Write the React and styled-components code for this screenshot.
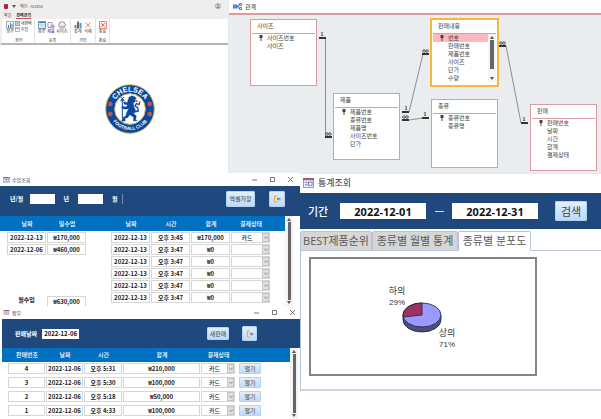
import React from "react";
import styled, { createGlobalStyle, css } from "styled-components";

const NAVY = "#1f497d";
const BLUE = "#0070c0";
const PINK = "#dc9aa3";

const GlobalStyle = createGlobalStyle`
  *, *::before, *::after { box-sizing: border-box; }
  body {
    margin: 0;
    background: #fff;
    font-family: "Noto Sans CJK KR", "Noto Sans", sans-serif;
    color: #333;
    overflow-x: hidden;
  }
  button, input, select { font: inherit; color: inherit; margin: 0; }
  table { border-collapse: collapse; table-layout: fixed; }
`;

const Page = styled.main`
  display: flex;
  flex-direction: column;
`;

const Split = styled.div`
  display: grid;
  grid-template-columns: ${(p) => p.$columns};
`;

/* ---------- ribbon window ---------- */

const AccessWindow = styled.section`
  display: flex;
  flex-direction: column;
  border-right: 1px solid #e8e8e8;
  font-size: 5px;
  line-height: 6px;
`;

const AccessTitle = styled.header`
  display: flex;
  align-items: center;
  gap: 4px;
  height: 12px;
  padding: 0 7px 0 4px;
  background: #eee;
  color: #555;
`;

const AccessName = styled.span`
  flex: 1;
  font-size: 4px;
`;

const MenuBar = styled.nav`
  display: flex;
  gap: 5px;
  height: 7px;
  padding-left: 4px;
  background: #eee;
`;

const MenuItem = styled.button`
  padding: 0;
  border: 0;
  border-bottom: 1px solid ${(p) => (p.$active ? "#c8525c" : "transparent")};
  background: none;
  font-size: 4px;
  line-height: 5px;
  font-weight: ${(p) => (p.$active ? 700 : 400)};
  height: 7px;
`;

const Ribbon = styled.div`
  display: flex;
  height: 26px;
  padding-left: 2px;
  background: #fff;
  border-bottom: 2px solid #b5b5b5;
  border-left: 2px solid #eee;
`;

const RibbonGroup = styled.div`
  display: flex;
  flex-direction: column;
  justify-content: space-between;
  width: ${(p) => p.$width}px;
  padding: 2px 2px 0;
  border-right: 1px solid #e2e2e2;
  font-size: 4px;
  line-height: 5px;
  text-align: center;
`;

const RibbonRow = styled.div`
  display: flex;
  justify-content: space-around;
`;

const RibbonButton = styled.button`
  display: flex;
  flex-direction: column;
  align-items: center;
  padding: 0;
  border: 0;
  background: none;
  line-height: 5px;
  white-space: nowrap;
`;

const SmallStack = styled.div`
  display: flex;
  flex-direction: column;
  gap: 1px;
`;

const SmallButton = styled(RibbonButton)`
  flex-direction: row;
  gap: 1px;
`;

const LogoArea = styled.div`
  display: flex;
  justify-content: center;
  padding: 39px 0 0 32px;
`;

/* ---------- relationship diagram ---------- */

const RelationWindow = styled.section`
  display: flex;
  flex-direction: column;
`;

const RelationTitle = styled.header`
  display: flex;
  align-items: center;
  gap: 3px;
  height: 15px;
  padding-left: 4px;
  border-bottom: 2px solid ${PINK};
  font-size: 6px;
  line-height: 8px;
`;

const Canvas = styled.div`
  position: relative;
  height: 158px;
  background: #e9edf0;
  overflow: hidden;
`;

const Links = styled.svg`
  position: absolute;
  left: 0;
  top: 0;
`;

const Entity = styled.article`
  position: absolute;
  left: ${(p) => p.$x}px;
  top: ${(p) => p.$y}px;
  width: 67px;
  height: ${(p) => p.$h}px;
  padding: 0 1px;
  background: #fff;
  border: 1px solid ${PINK};
  ${(p) => p.$selected && css`outline: 2px solid #f6b83c; outline-offset: -1px;`}
  font-size: 6px;
  line-height: 8px;
  color: #444;
`;

const EntityName = styled.h3`
  margin: 0;
  height: 14px;
  padding: 2px 0 0 5px;
  border-bottom: 1px solid ${PINK};
  font-size: 6px;
  font-weight: 400;
  line-height: 8px;
`;

const EntityBody = styled.div`
  display: flex;
`;

const FieldList = styled.ul`
  flex: 1;
  margin: 0;
  padding: 0;
  list-style: none;
`;

const Field = styled.li`
  display: flex;
  align-items: center;
  gap: 3px;
  height: 8px;
  padding-left: 6px;
  background: ${(p) => (p.$selected ? "#ffb9bd" : "transparent")};
`;

/* ---------- form windows ---------- */

const Column = styled.div`
  display: flex;
  flex-direction: column;
  min-width: 0;
`;

const FormWindow = styled.section`
  display: flex;
  flex-direction: column;
  padding-left: ${(p) => p.$inset || 0}px;
`;

const Caption = styled.header`
  display: flex;
  align-items: center;
  gap: 2px;
  height: 13px;
  padding: 0 ${(p) => p.$right}px 0 ${(p) => p.$left}px;
  font-size: 5px;
  line-height: 8px;
`;

const CaptionText = styled.h2`
  flex: 1;
  margin: 0;
  font-size: inherit;
  font-weight: 400;
`;

const CaptionButtons = styled.div`
  display: flex;
  gap: 12px;
`;

const CaptionButton = styled.button`
  display: flex;
  padding: 0;
  border: 0;
  background: none;
`;

const FormHeader = styled.div`
  display: flex;
  align-items: center;
  height: ${(p) => p.$h}px;
  padding: 0 ${(p) => p.$right}px ${(p) => p.$bottom}px ${(p) => p.$left}px;
  background: ${NAVY};
  color: #fff;
  font-size: 6px;
  font-weight: 700;
  line-height: 8px;
`;

const HeaderField = styled.label`
  display: flex;
  align-items: center;
  gap: ${(p) => p.$gap}px;
  margin-right: ${(p) => p.$after || 0}px;
`;

const HeaderInput = styled.input`
  width: ${(p) => p.$w}px;
  height: 10px;
  padding: 0;
  border: 0;
  background: #fff;
  color: #111;
  text-align: center;
`;

const Separator = styled.span`
  width: 1px;
  height: 10px;
  margin-left: 5px;
  background: #6f8cb3;
`;

const Spacer = styled.span`
  flex: 1;
`;

const ActionButton = styled.button`
  display: flex;
  align-items: center;
  justify-content: center;
  width: ${(p) => p.$w}px;
  height: ${(p) => p.$h}px;
  margin-right: ${(p) => p.$after || 0}px;
  padding: 0;
  border: 1px solid #b5d2f3;
  border-radius: 1px;
  background: linear-gradient(#e2eefb, #bcd9fb);
  color: #444;
  font-weight: 400;
  font-size: ${(p) => p.$size || 6}px;
  line-height: 8px;
  white-space: nowrap;
`;

const FormBody = styled.div`
  display: flex;
  align-items: stretch;
  height: ${(p) => p.$h}px;
  overflow: hidden;
`;

const TableSlot = styled.div`
  flex: ${(p) => p.$grow} 1 0;
  min-width: 0;
`;

const DataTable = styled.table`
  width: 100%;
  font-size: 6px;
  font-weight: 700;
  line-height: 8px;
  color: #222;
`;

const HeadCell = styled.th`
  height: ${(p) => p.$h}px;
  padding: 0;
  background: ${BLUE};
  color: #fff;
  font-size: 6px;
  font-weight: 500;
  white-space: nowrap;
`;

const Cell = styled.td`
  height: ${(p) => p.$h}px;
  padding: 1px 1px 0 0;
  vertical-align: top;
  text-align: center;
`;

const CellInput = styled.input`
  display: block;
  width: 100%;
  height: 11px;
  padding: 0;
  border: 1px solid #d6d6d6;
  background: #fff;
  text-align: center;
`;

const Combo = styled.span`
  display: flex;
  height: 11px;
  border: 1px solid #d6d6d6;
`;

const ComboSelect = styled.select`
  flex: 1;
  min-width: 0;
  height: 9px;
  padding: 0;
  border: 0;
  appearance: none;
  background: #fff;
  text-align: center;
  text-align-last: center;
  line-height: 8px;
  font-weight: 500;
`;

const ComboArrow = styled.span`
  display: flex;
  align-items: center;
  justify-content: center;
  width: 7px;
  background: #e1e1e1;
  border: 1px solid #c4c4c4;
`;

const ScrollTrack = styled.div`
  display: flex;
  flex-direction: column;
  align-items: center;
  width: 8px;
  margin-right: ${(p) => p.$after || 0}px;
  padding: 2px 0;
  gap: 1px;
  background: #f4f4f4;
`;

const ScrollThumb = styled.span`
  flex: ${(p) => p.$grow || 1};
  width: ${(p) => p.$w || 3}px;
  background: #666;
`;

const ScrollRest = styled.span`
  flex: ${(p) => p.$grow};
`;

/* ---------- statistics window ---------- */

const StatsWindow = styled.section`
  display: flex;
  flex-direction: column;
  min-width: 0;
  font-size: 11px;
  line-height: 14px;
`;

const StatsTitle = styled.header`
  display: flex;
  align-items: center;
  gap: 4px;
  height: 20px;
  padding: 0 0 2px 3px;
  border-top: 1px solid #e3e8ee;
`;

const StatsName = styled.h2`
  margin: 0;
  font-size: 9px;
  font-weight: 400;
`;

const Period = styled.div`
  display: flex;
  align-items: center;
  height: 36px;
  padding-left: 8px;
  background: ${NAVY};
  color: #fff;
  white-space: nowrap;
`;

const PeriodLabel = styled.span`
  width: 32px;
  font-weight: 500;
`;

const PeriodInput = styled.input`
  width: 86px;
  height: 16px;
  padding: 0;
  border: 0;
  background: #fff;
  color: #111;
  font-family: "Open Sans", sans-serif;
  font-weight: 700;
  text-align: center;
`;

const Dash = styled.span`
  width: 9px;
  height: 1px;
  margin: 0 8px 0 9px;
  background: #d6dfea;
`;

const SearchGap = styled.span`
  width: 17px;
`;

const TabList = styled.div`
  display: flex;
  height: 22px;
  padding-top: 2px;
  border-bottom: 1px solid #b7c3d8;
`;

const Tab = styled.button`
  height: 20px;
  width: ${(p) => p.$w}px;
  padding: 0;
  border: 1px solid #b7c3d8;
  border-bottom-color: ${(p) => (p.$active ? "#fff" : "#b7c3d8")};
  border-radius: 2px 2px 0 0;
  background: ${(p) => (p.$active ? "#fff" : "#d6d6d6")};
  color: #595959;
  font-family: "Open Sans", "Noto Sans CJK KR", sans-serif;
  line-height: 14px;
  white-space: nowrap;
`;

const TabPanel = styled.div`
  height: 140px;
  padding: 6px 8px;
  border-left: 1px solid #b7c3d8;
  border-bottom: 2px solid #cbd3e3;
`;

const ChartFrame = styled.figure`
  width: 228px;
  height: 119px;
  margin: 0;
  border: 2px solid #858585;
`;

/* ---------- drawings ---------- */

const FormIcon = ({ w, h }) => (
  <svg width={w} height={h} viewBox="0 0 12 11">
    <rect x="0.5" y="0.5" width="11" height="10" fill="#e9effc" stroke="#8398cd" />
    <rect x="0" y="0" width="12" height="2.5" fill="#b4566c" />
    <path d="M2 5h3M2 7.5h3" stroke="#5c78bd" />
    <rect x="6" y="4.5" width="4" height="3.5" fill="#fff" stroke="#5c78bd" />
  </svg>
);

const DoorIcon = () => (
  <svg width="8" height="8" viewBox="0 0 8 8" aria-hidden="true">
    <path d="M4 1H1.500v6H4" fill="#f8dcae" stroke="#eda545" />
    <path d="M7.5 4H4.5M5.6 2.8L4.4 4l1.2 1.2" fill="none" stroke="#3467a5" />
  </svg>
);

const Triangle = ({ up }) => (
  <svg width="4" height="3" viewBox="0 0 4 3">
    <path d={up ? "M0 3L2 0l2 3z" : "M0 0h4L2 3z"} fill="#555" />
  </svg>
);

const KeyIcon = () => (
  <svg width="6" height="6" viewBox="0 0 6 6">
    <path d="M1.5 0h3v3h-1v3h-1V3h-1z" fill="#444" />
  </svg>
);

const icons = {
  chart: (
    <>
      <rect x="0.5" y="0.5" width="7" height="7" fill="#f5f5f5" stroke="#aaa" />
      <path d="M2.5 7V4M4.5 7V2M6 7V3" stroke="#3d86c6" />
    </>
  ),
  table: (
    <>
      <rect x="0.5" y="0.5" width="7" height="7" fill="#e5f3fd" stroke="#7a9bb4" />
      <path d="M1 1.5h6" stroke="#3d86c6" />
      <path d="M1 4h6M3 2v5M5 2v5" stroke="#9ac8ea" strokeWidth="0.6" />
    </>
  ),
  form: (
    <>
      <rect x="0.5" y="0.5" width="7" height="7" fill="#fff" stroke="#777" />
      <path d="M1 2h6M2 4h4M2 6h4" stroke="#888" />
    </>
  ),
  product: (
    <>
      <path d="M1 1.5v5h3M1 1.5h4v2" fill="none" stroke="#888" strokeWidth="0.8" />
      <circle cx="5.5" cy="5.5" r="2.3" fill="#c79bd4" />
    </>
  ),
  face: (
    <>
      <circle cx="4" cy="4" r="3.3" fill="#fff" stroke="#666" strokeWidth="0.7" />
      <path d="M2.5 3h.8M4.8 3h.8M2.2 4.8Q4 6.8 5.8 4.8" fill="none" stroke="#666" strokeWidth="0.7" />
    </>
  ),
  bars: (
    <>
      <rect x="0.5" y="4" width="2" height="3.5" fill="#888" />
      <rect x="3" y="0.5" width="2" height="7" fill="#5f6b75" />
      <rect x="5.5" y="2" width="2" height="5.5" fill="#4f9ed8" />
    </>
  ),
  cross: <path d="M1.5 1.5l5 5M6.5 1.5l-5 5" stroke="#e66" strokeWidth="0.8" />,
  close: (
    <>
      <rect x="0.5" y="0.5" width="7" height="7" fill="#fdeceb" stroke="#e28a80" />
      <path d="M2 2l4 4M6 2L2 6" stroke="#dd5548" strokeWidth="0.8" />
    </>
  ),
  sheet: (
    <>
      <rect x="1" y="1" width="6" height="6" fill="#fff" stroke="#888" />
      <path d="M1 2.5h6" stroke="#888" />
    </>
  ),
};

const RibbonIcon = ({ name, size = 8 }) => (
  <svg width={size} height={size} viewBox="0 0 8 8" aria-hidden="true">{icons[name]}</svg>
);

const ClubCrest = () => (
  <svg width="50" height="50" viewBox="0 0 150 150" role="img" aria-label="Chelsea Football Club">
    <defs>
      <path id="arcTop" d="M23 75A52 52 0 0 1 127 75" />
      <path id="arcBottom" d="M12 75A63 63 0 0 0 138 75" />
    </defs>
    <circle cx="75" cy="75" r="73" fill="#0b479d" stroke="#d5bd62" strokeWidth="3" />
    <circle cx="75" cy="75" r="46" fill="#fff" stroke="#d5bd62" strokeWidth="3" />
    <g fill="#fff" fontFamily="Liberation Sans, sans-serif" fontWeight="700" textAnchor="middle">
      <text fontSize="22"><textPath href="#arcTop" startOffset="50%">CHELSEA</textPath></text>
      <text fontSize="14"><textPath href="#arcBottom" startOffset="50%">FOOTBALL CLUB</textPath></text>
    </g>
    <g fill="#e23f47" stroke="#d59a55" strokeWidth="1">
      <circle cx="16" cy="60" r="6" /><circle cx="16" cy="90" r="6" />
      <circle cx="134" cy="60" r="6" /><circle cx="134" cy="90" r="6" />
    </g>
    <g fill="#0b479d" stroke="#0b479d" strokeLinecap="round" strokeLinejoin="round">
      <path d="M72 40l8-5 10 3 4 6-5 3 2 6-6 3 2 13 5 10-6 9 8 8-2 11 5 3-12 1 1-11-12-8-6 9-8 2 1 8-11 1 3-11 9-5 4-13 5-9-11 2-10-4 2-5 10 2 7-6-11-2-3-6 5-2 6 4z" />
      <path d="M52 44v58M48 40l8 8M56 40l-8 8M48 50h8" strokeWidth="3" fill="none" />
      <path d="M88 84l12-3-2-10-8-5 4-7 8 3 2-8" strokeWidth="4" fill="none" />
    </g>
    <path d="M91 49l5 2-3 3M97 60l4 4" stroke="#e23f47" strokeWidth="4" fill="none" />
  </svg>
);

const PieChart = () => (
  <svg width="224" height="115" viewBox="0 0 224 115" role="img" aria-label="하의 29%, 상의 71%">
    <path d="M92 56v5A19 12 0 0 0 130 61v-5z" fill="#4d4d86" stroke="#222" strokeWidth="0.8" />
    <ellipse cx="111" cy="56" rx="19" ry="12" fill="#9999ff" stroke="#222" strokeWidth="0.8" />
    <path d="M111 56V44A19 12 0 0 0 92.300 58z" fill="#993366" stroke="#222" strokeWidth="0.8" />
    <g fontSize="9" fill="#333" textAnchor="middle">
      <text x="86" y="35">하의</text>
      <text x="136" y="77">상의</text>
    </g>
    <g fontSize="8" fill="#333" textAnchor="middle" fontFamily="Liberation Sans, sans-serif">
      <text x="86" y="46">29%</text>
      <text x="136" y="88">71%</text>
    </g>
  </svg>
);

/* ---------- data ---------- */

const entities = [
  { name: "사이즈", x: 21, y: 4, h: 67, fields: ["사이즈번호", "사이즈"] },
  { name: "제품", x: 104, y: 78, h: 67, fields: ["제품번호", "종류번호", "제품명", "사이즈번호", "단가"] },
  { name: "판매내용", x: 202, y: 4, h: 67, selected: true, fields: ["번호", "판매번호", "제품번호", "사이즈", "단가", "수량"] },
  { name: "종류", x: 202, y: 84, h: 69, fields: ["종류번호", "종류명"] },
  { name: "판매", x: 301, y: 89, h: 67, fields: ["판매번호", "날짜", "시간", "합계", "결제상태"] },
];

const dailyTotals = [["2022-12-13", "₩170,000"], ["2022-12-06", "₩460,000"]];

const sales = [
  ["2022-12-13", "오후 3:45", "₩170,000", "카드"],
  ...Array.from({ length: 5 }, () => ["2022-12-13", "오후 3:47", "₩0", ""]),
];

const ledger = [
  ["4", "2022-12-06", "오후 5:31", "₩210,000"],
  ["3", "2022-12-06", "오후 5:30", "₩100,000"],
  ["2", "2022-12-06", "오후 5:18", "₩50,000"],
  ["1", "2022-12-06", "오후 4:33", "₩100,000"],
];

/* ---------- composed parts ---------- */

const WindowButtons = () => (
  <CaptionButtons>
    {[["최소화", "M0 3h5"], ["최대화", "M0.5 0.500h4v4h-4z"], ["닫기", "M0 0l5 5M5 0L0 5"]].map(([label, d]) => (
      <CaptionButton key={label} aria-label={label}>
        <svg width="6" height="6" viewBox="0 0 6 6"><path d={d} fill="none" stroke="#555" strokeWidth="0.8" /></svg>
      </CaptionButton>
    ))}
  </CaptionButtons>
);

const StateCombo = ({ value }) => (
  <Combo>
    <ComboSelect aria-label="결제상태" defaultValue={value}>
      <option value={value}>{value}</option>
    </ComboSelect>
    <ComboArrow>
      <svg width="4" height="3" viewBox="0 0 4 3"><path d="M0 0.500L2 2.500l2-2" fill="none" stroke="#666" strokeWidth="0.7" /></svg>
    </ComboArrow>
  </Combo>
);

const EntityBox = ({ name, x, y, h, selected, fields }) => (
  <Entity $x={x} $y={y} $h={h} $selected={selected}>
    <EntityName>{name}</EntityName>
    <EntityBody>
      <FieldList>
        {fields.map((field, i) => (
          <Field key={field} $selected={selected && i === 0}>
            {i === 0 ? <KeyIcon /> : <svg width="6" height="6" />}
            {field}
          </Field>
        ))}
      </FieldList>
      {selected && (
        <ScrollTrack>
          <Triangle up />
          <ScrollThumb $grow={30} $w={4} />
          <ScrollRest $grow={6} />
          <Triangle />
        </ScrollTrack>
      )}
    </EntityBody>
  </Entity>
);

const Head = ({ cells, h }) => (
  <thead>
    <tr>{cells.map((c, i) => <HeadCell key={i} $h={h}>{c}</HeadCell>)}</tr>
  </thead>
);

const Cols = ({ widths }) => {
  const total = widths.reduce((a, b) => a + b, 0);
  return <colgroup>{widths.map((w, i) => <col key={i} style={{ width: `${(w / total) * 100}%` }} />)}</colgroup>;
};

const Access = () => (
  <AccessWindow>
    <AccessTitle>
      <svg width="4" height="5" viewBox="0 0 4 5"><rect width="4" height="5" rx="1" fill="#b51f3b" /></svg>
      <Triangle />
      <AccessName>메인 - Access</AccessName>
      <svg width="6" height="6" viewBox="0 0 6 6">
        <circle cx="3" cy="3" r="2.600" fill="#ddd" stroke="#888" strokeWidth="0.600" />
        <circle cx="3" cy="2.300" r="1" fill="#888" /><path d="M1 5q2-3 4 0" fill="#888" />
      </svg>
    </AccessTitle>
    <MenuBar>
      <MenuItem>파일</MenuItem>
      <MenuItem $active>판매관리</MenuItem>
    </MenuBar>
    <Ribbon>
      <RibbonGroup $width={31}>
        <RibbonRow>
          <RibbonButton><RibbonIcon name="chart" />장부</RibbonButton>
          <SmallStack>
            <SmallButton><RibbonIcon name="form" size={5} />새판매</SmallButton>
            <SmallButton><RibbonIcon name="sheet" size={5} />수입</SmallButton>
          </SmallStack>
        </RibbonRow>
        장부
      </RibbonGroup>
      <RibbonGroup $width={36}>
        <RibbonRow>
          <RibbonButton><RibbonIcon name="table" />종류</RibbonButton>
          <RibbonButton><RibbonIcon name="product" />제품</RibbonButton>
          <RibbonButton><RibbonIcon name="face" />사이즈</RibbonButton>
        </RibbonRow>
        등록
      </RibbonGroup>
      <RibbonGroup $width={25}>
        <RibbonRow>
          <RibbonButton><RibbonIcon name="bars" />통계</RibbonButton>
          <RibbonButton><RibbonIcon name="cross" />삭제</RibbonButton>
        </RibbonRow>
        기타
      </RibbonGroup>
      <RibbonGroup $width={14}>
        <RibbonRow>
          <RibbonButton><RibbonIcon name="close" />종료</RibbonButton>
        </RibbonRow>
        종료
      </RibbonGroup>
    </Ribbon>
    <LogoArea><ClubCrest /></LogoArea>
  </AccessWindow>
);

const Relations = () => (
  <RelationWindow>
    <RelationTitle>
      <svg width="9" height="7" viewBox="0 0 9 7">
        <rect x="0.500" y="2" width="3" height="3" fill="#7c9be0" stroke="#4a6fcb" />
        <path d="M4 3.500h2M6.500 0.500h2v2h-2zM6.500 4.500h2v2h-2zM5 1.500v4" fill="none" stroke="#4a6fcb" />
      </svg>
      관계
    </RelationTitle>
    <Canvas>
      <Links width="372" height="158" viewBox="0 0 372 158">
        <path d="M96.500 23v98M180 97L194 39M180 105L194 103M277 31L292 108" fill="none" stroke="#8a8f93" />
        <path d="M90 23h7M96 122h7M173 97h7M173 105h7M193 39h7M193 103h7M270 31h7M292 108h7" stroke="#333" strokeWidth="2" />
        <g fontSize="5" fontWeight="700" fill="#333" textAnchor="middle">
          <text x="93" y="21">1</text><text x="177" y="95">1</text>
          <text x="196" y="101">1</text><text x="295" y="106">1</text>
        </g>
        <g fill="none" stroke="#333" strokeWidth="0.8">
          {[[100, 119], [177, 102], [197, 36], [274, 28]].map(([x, y]) => (
            <g key={x}><circle cx={x - 2} cy={y} r="1.300" /><circle cx={x + 1} cy={y} r="1.300" /></g>
          ))}
        </g>
      </Links>
      {entities.map((e) => <EntityBox key={e.name} {...e} />)}
    </Canvas>
  </RelationWindow>
);

const Income = () => (
  <FormWindow>
    <Caption $left={3} $right={6}>
      <FormIcon w={7} h={6} />
      <CaptionText>수입조회</CaptionText>
      <WindowButtons />
    </Caption>
    <FormHeader $h={30} $left={10} $right={15} $bottom={5}>
      <HeaderField $gap={7} $after={8}>년/월<HeaderInput $w={25} /></HeaderField>
      <HeaderField $gap={9} $after={9}>년<HeaderInput $w={25} /></HeaderField>
      <span>월</span>
      <Separator />
      <Spacer />
      <ActionButton $w={29} $h={16} $after={14}>엑셀저장</ActionButton>
      <ActionButton $w={16} $h={16} aria-label="나가기"><DoorIcon /></ActionButton>
    </FormHeader>
    <FormBody $h={90}>
      <TableSlot $grow={111}>
        <DataTable>
          <Cols widths={[7, 40, 40, 24]} />
          <Head h={15} cells={["", "날짜", "일수업", ""]} />
          <tbody>
            {dailyTotals.map(([date, sum]) => (
              <tr key={date}>
                <Cell $h={12} />
                <Cell $h={12}><CellInput aria-label="날짜" defaultValue={date} /></Cell>
                <Cell $h={12}><CellInput aria-label="일수업" defaultValue={sum} /></Cell>
                <Cell $h={12} />
              </tr>
            ))}
          </tbody>
          <tfoot>
            <tr><Cell $h={40} colSpan={4} /></tr>
            <tr>
              <Cell $h={12} />
              <Cell $h={12}><label htmlFor="month-total">월수입</label></Cell>
              <Cell $h={12}><CellInput id="month-total" defaultValue="₩630,000" /></Cell>
              <Cell $h={12} />
            </tr>
          </tfoot>
        </DataTable>
      </TableSlot>
      <TableSlot $grow={174}>
        <DataTable>
          <Cols widths={[40, 40, 40, 40, 14]} />
          <Head h={15} cells={["날짜", "시간", "합계", "결제상태", ""]} />
          <tbody>
            {sales.map(([date, time, sum, state], i) => (
              <tr key={i}>
                <Cell $h={12}><CellInput aria-label="날짜" defaultValue={date} /></Cell>
                <Cell $h={12}><CellInput aria-label="시간" defaultValue={time} /></Cell>
                <Cell $h={12}><CellInput aria-label="합계" defaultValue={sum} /></Cell>
                <Cell $h={12}><StateCombo value={state} /></Cell>
                <Cell $h={12} />
              </tr>
            ))}
          </tbody>
        </DataTable>
      </TableSlot>
      <ScrollTrack $after={7}><Triangle up /><ScrollThumb /><Triangle /></ScrollTrack>
    </FormBody>
  </FormWindow>
);

const Ledger = () => (
  <FormWindow $inset={2}>
    <Caption $left={1} $right={4}>
      <FormIcon w={7} h={5} />
      <CaptionText>장부</CaptionText>
      <WindowButtons />
    </Caption>
    <FormHeader $h={29} $left={13} $right={43} $bottom={0}>
      <HeaderField $gap={5}>판매날짜<HeaderInput $w={37} defaultValue="2022-12-06" /></HeaderField>
      <Spacer />
      <ActionButton $w={22} $h={13} $after={13}>새판매</ActionButton>
      <ActionButton $w={15} $h={15} aria-label="나가기"><DoorIcon /></ActionButton>
    </FormHeader>
    <FormBody $h={71}>
      <TableSlot $grow={1}>
        <DataTable>
          <Cols widths={[6, 38, 38, 39, 78, 35, 3, 22, 29]} />
          <Head h={14} cells={["", "판매번호", "날짜", "시간", "합계", "결제상태", "", "", ""]} />
          <tbody>
            {ledger.map(([no, date, time, sum]) => (
              <tr key={no}>
                <Cell $h={14} />
                <Cell $h={14}><CellInput aria-label="판매번호" defaultValue={no} /></Cell>
                <Cell $h={14}><CellInput aria-label="날짜" defaultValue={date} /></Cell>
                <Cell $h={14}><CellInput aria-label="시간" defaultValue={time} /></Cell>
                <Cell $h={14}><CellInput aria-label="합계" defaultValue={sum} /></Cell>
                <Cell $h={14}><StateCombo value="카드" /></Cell>
                <Cell $h={14} />
                <Cell $h={14}><ActionButton $w={22} $h={11}>열기</ActionButton></Cell>
                <Cell $h={14} />
              </tr>
            ))}
          </tbody>
        </DataTable>
      </TableSlot>
      <ScrollTrack $after={2}><Triangle up /><ScrollThumb /><Triangle /></ScrollTrack>
    </FormBody>
  </FormWindow>
);

const Stats = () => (
  <StatsWindow>
    <StatsTitle>
      <FormIcon w={11} h={10} />
      <StatsName>통계조회</StatsName>
    </StatsTitle>
    <Period>
      <PeriodLabel>기간</PeriodLabel>
      <PeriodInput aria-label="시작일" defaultValue="2022-12-01" />
      <Dash />
      <PeriodInput aria-label="종료일" defaultValue="2022-12-31" />
      <SearchGap />
      <ActionButton $w={32} $h={20} $size={11}>검색</ActionButton>
    </Period>
    <TabList role="tablist">
      <Tab role="tab" $w={72}>BEST제품순위</Tab>
      <Tab role="tab" $w={86}>종류별 월별 통계</Tab>
      <Tab role="tab" $w={73} $active aria-selected="true">종류별 분포도</Tab>
    </TabList>
    <TabPanel role="tabpanel">
      <ChartFrame><PieChart /></ChartFrame>
    </TabPanel>
  </StatsWindow>
);

export default function App() {
  return (
    <Page>
      <GlobalStyle />
      <Split $columns="minmax(0, 229fr) minmax(0, 372fr)">
        <Access />
        <Relations />
      </Split>
      <Split $columns="minmax(0, 300fr) minmax(0, 301fr)">
        <Column>
          <Income />
          <Ledger />
        </Column>
        <Stats />
      </Split>
    </Page>
  );
}
